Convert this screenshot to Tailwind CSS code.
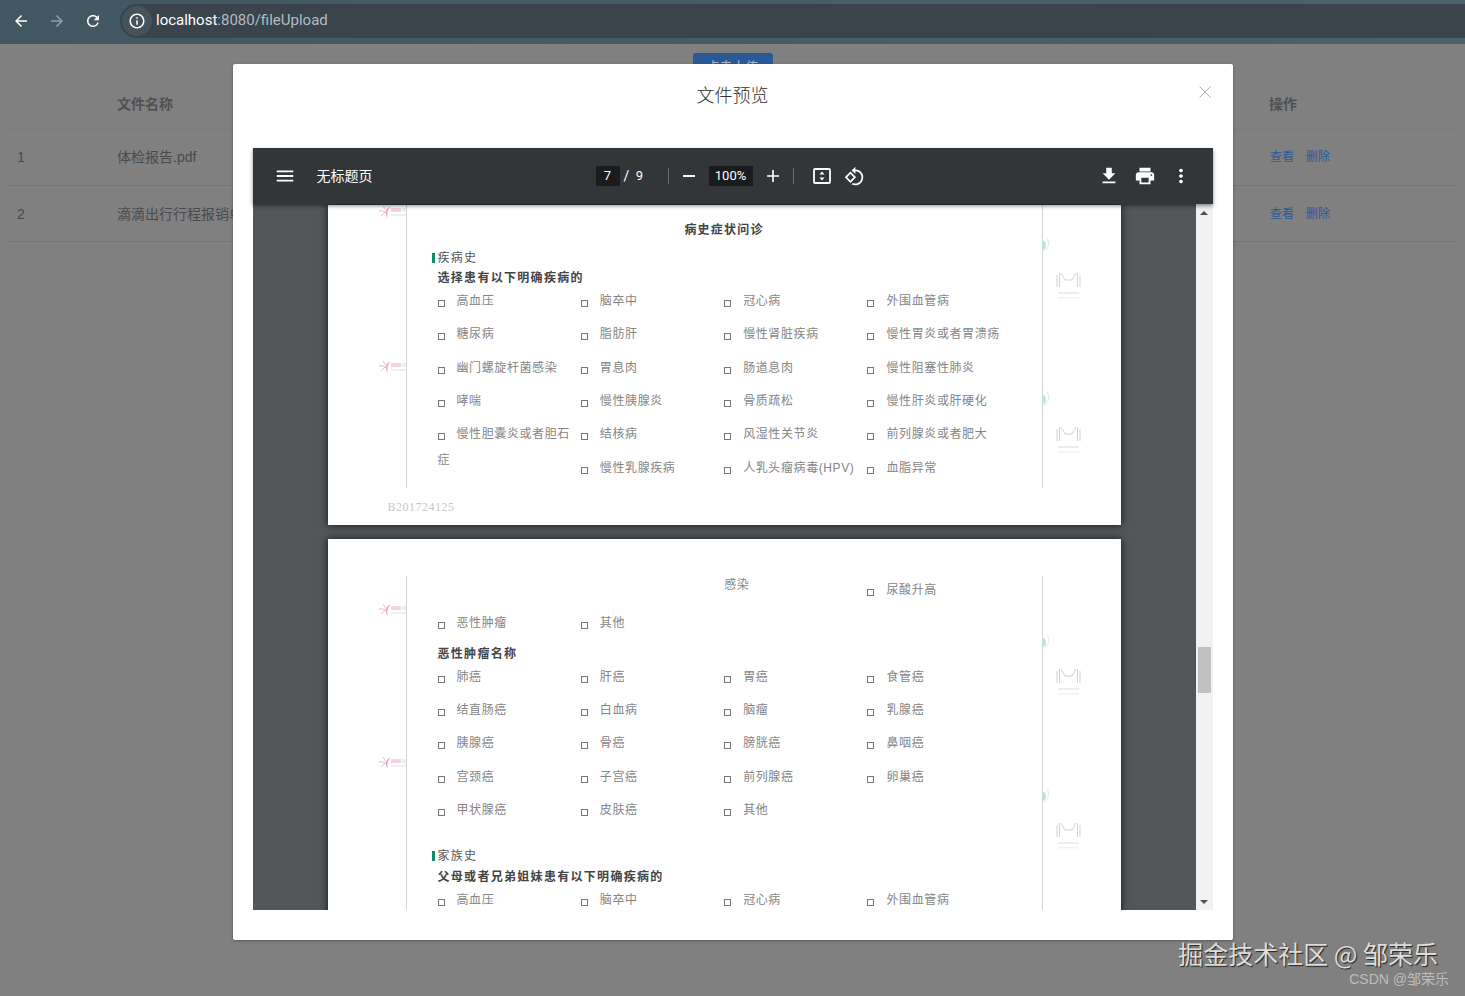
<!DOCTYPE html>
<html lang="en">
<head>
    <meta charset="UTF-8">
    <title>文件上传</title>
    <script src="https://cdn.jsdelivr.net/npm/@tailwindcss/browser@4"></script>
</head>
<body class="bg-[#808080] font-['Liberation_Sans','Noto_Sans_CJK_SC',sans-serif]">
    <svg class="hidden">
        <symbol id="pink" viewBox="0 0 29 14">
            <path d="M13 1C8 3 6 8 10 13C8.5 8 10 4 13 1z" fill="#eda3b8"/>
            <path d="M1 6c3-.5 5 0 7 2M5 1c1 1 2 3 3 5M3 11c1-1 3-3 4-4" stroke="#edb9c8" stroke-width="1" fill="none"/>
            <rect x="13" y="3" width="10" height="4" fill="#f6d3dd"/>
            <rect x="24" y="3" width="4" height="4" fill="#f1eef0"/>
            <rect x="13" y="9" width="15" height="2" fill="#f1eef0"/>
        </symbol>
        <symbol id="mark" viewBox="0 0 25 29">
            <path d="M1 4v12M3.5 2v14M21.5 2v14M24 4v12M5 2l4 7h7l4-7" stroke="#d2d2cf" stroke-width="1" fill="none"/>
            <rect x="2" y="21" width="21" height="2" fill="#efedea"/>
            <rect x="2" y="26" width="21" height="1.5" fill="#f4f2ee"/>
        </symbol>
        <symbol id="arc" viewBox="0 0 8 17">
            <path d="M0 3c3 1 4 3 4 6s-2 4-4 4z" fill="#bfe3d9"/>
            <path d="M5 1c3 4 2 11-5 15" stroke="#dcebe6" stroke-width="1" fill="none"/>
        </symbol>
    </svg>

    <div class="relative h-[996px] overflow-hidden">
        <!-- Browser bar -->
        <div class="flex items-center h-[44px] bg-gradient-to-r from-[#415862] to-[#4a626d] pb-[2px]">
            <svg class="w-[18px] h-[18px] ml-[12px] fill-white" viewBox="0 0 24 24"><path d="M20 11H7.83l5.59-5.59L12 4l-8 8 8 8 1.41-1.41L7.83 13H20v-2z"/></svg>
            <svg class="w-[18px] h-[18px] ml-[18px] fill-[#8fa0aa]" viewBox="0 0 24 24"><path d="M12 4l-1.41 1.41L16.17 11H4v2h12.17l-5.58 5.59L12 20l8-8z"/></svg>
            <svg class="w-[18px] h-[18px] ml-[18px] fill-white" viewBox="0 0 24 24"><path d="M17.65 6.35C16.2 4.9 14.21 4 12 4c-4.42 0-7.99 3.58-7.99 8s3.57 8 7.99 8c3.73 0 6.84-2.55 7.73-6h-2.08c-.82 2.33-3.04 4-5.65 4-3.31 0-6-2.69-6-6s2.69-6 6-6c1.66 0 3.14.69 4.22 1.78L13 11h7V4l-2.35 2.35z"/></svg>
            <div class="flex items-center flex-1 h-[34px] ml-[18px] pl-[2px] rounded-l-full bg-[#39444c]">
                <div class="flex items-center justify-center w-[30px] h-[30px] rounded-full bg-[#46535c]">
                    <svg class="w-[18px] h-[18px] fill-white" viewBox="0 0 24 24"><path d="M11 7h2v2h-2zm0 4h2v6h-2zm1-9C6.48 2 2 6.48 2 12s4.48 10 10 10 10-4.48 10-10S17.52 2 12 2zm0 18c-4.41 0-8-3.59-8-8s3.59-8 8-8 8 3.59 8 8-3.59 8-8 8z"/></svg>
                </div>
                <span class="ml-[4px] pb-[1px] text-[15px] text-[#b3bcc2] font-['Roboto',sans-serif]"><span class="text-white">localhost</span>:8080/fileUpload</span>
            </div>
        </div>

        <!-- Page under the dialog -->
        <div class="flex justify-center pt-[9px]">
            <div class="flex justify-center w-[80px] h-[28px] pt-[4px] rounded-t-[3px] bg-[#2a5a94] text-[13px] text-[#a9bdd6]">点击上传</div>
        </div>
        <div class="mx-2 mt-[4px] text-[14px] text-[#4a4a4a]">
            <div class="flex items-center h-[45px] pb-[6px] pl-[9px] font-bold text-[#505050] border-b border-[#7b7b7b]">
                <div class="w-[100px]"></div>
                <div class="flex-1">文件名称</div>
                <div class="w-[188px]">操作</div>
            </div>
            <div class="flex items-center h-[56px] pl-[9px] border-b border-[#757575]">
                <div class="w-[100px]">1</div>
                <div class="flex-1">体检报告.pdf</div>
                <div class="flex gap-3 w-[187px] pb-[2px] text-[12px] text-[#2b5b96]"><span>查看</span><span>删除</span></div>
            </div>
            <div class="flex items-center h-[56px] pl-[9px] pt-[1px] border-b border-[#757575]">
                <div class="w-[100px]">2</div>
                <div class="flex-1">滴滴出行行程报销单.pdf</div>
                <div class="flex gap-3 w-[187px] text-[12px] text-[#2b5b96]"><span>查看</span><span>删除</span></div>
            </div>
        </div>

        <!-- Dialog -->
        <div class="absolute inset-x-0 top-[44px] flex justify-center pt-[20px]">
            <div class="relative w-[1000px] h-[876px] px-[20px] bg-white rounded-[2px] shadow-[0_1px_3px_rgba(0,0,0,0.3)]">
                <div class="flex items-center justify-center h-[60px] text-[18px] text-[#303133] font-['Noto_Sans_CJK_SC',sans-serif] font-light">文件预览</div>
                <svg class="absolute top-[22px] right-[22px] w-[12px] h-[12px] stroke-[#a8abb2]" viewBox="0 0 12 12" fill="none"><path d="M.5.5l11 11M11.5.5l-11 11"/></svg>

                <!-- PDF viewer -->
                <div class="mt-[24px] h-[762px] flex flex-col">
                    <div class="relative z-10 flex items-center h-[56px] shrink-0 bg-[#323639] text-white shadow-[0_2px_4px_rgba(0,0,0,0.45)]">
                        <svg class="w-[22px] h-[22px] ml-[21px] fill-white" viewBox="0 0 24 24"><path d="M3 18h18v-2H3v2zm0-5h18v-2H3v2zm0-7v2h18V6H3z"/></svg>
                        <div class="w-[279px] ml-[21px] text-[14px]">无标题页</div>
                        <div class="flex items-center justify-center w-[24px] h-[20px] bg-[#191b1c] text-[13px] font-['Roboto',sans-serif]">7</div>
                        <div class="w-[16px] -ml-px text-center text-[14px] font-['Roboto',sans-serif]">/</div>
                        <div class="w-[12px] -ml-px text-center text-[13px] font-['Roboto',sans-serif]">9</div>
                        <div class="w-px h-[16px] ml-[22px] bg-[#6b6f72]"></div>
                        <svg class="w-[18px] h-[18px] ml-[11px] fill-white" viewBox="0 0 18 18"><path d="M3 8h12v2H3z"/></svg>
                        <div class="flex items-center justify-center w-[44px] h-[20px] ml-[11px] bg-[#191b1c] text-[13px] font-['Roboto',sans-serif]">100%</div>
                        <svg class="w-[18px] h-[18px] ml-[11px] fill-white" viewBox="0 0 18 18"><path d="M3 8.2h5.2V3h1.6v5.2H15v1.6H9.8V15H8.2V9.8H3z"/></svg>
                        <div class="w-px h-[16px] ml-[11px] bg-[#6b6f72]"></div>
                        <svg class="w-[20px] h-[18px] ml-[18px]" viewBox="0 0 20 18"><rect x="2" y="2" width="16" height="14" rx="1" fill="none" stroke="#fff" stroke-width="1.8"/><path d="M10 4.5l2.5 3h-5zM10 13.5l-2.5-3h5z" fill="#fff"/></svg>
                        <svg class="w-[21px] h-[21px] ml-[12px] fill-white" viewBox="0 0 24 24"><path d="M7.34 6.41L.86 12.9l6.49 6.48 6.49-6.48-6.5-6.49zM3.69 12.9l3.66-3.66L11 12.9l-3.66 3.66-3.65-3.66zm15.67-6.26C17.61 4.88 15.3 4 13 4V.76L8.76 5 13 9.24V6c1.79 0 3.58.68 4.95 2.05 2.73 2.73 2.73 7.17 0 9.9C16.58 19.32 14.79 20 13 20c-.97 0-1.94-.21-2.84-.61l-1.49 1.49C10.02 21.62 11.51 22 13 22c2.3 0 4.61-.88 6.36-2.64 3.52-3.51 3.52-9.21 0-12.72z"/></svg>
                        <div class="flex items-center ml-auto mr-[21px] gap-[14px]">
                            <svg class="w-[22px] h-[22px] fill-white" viewBox="0 0 24 24"><path d="M19 9h-4V3H9v6H5l7 7 7-7zM5 18v2h14v-2H5z"/></svg>
                            <svg class="w-[22px] h-[22px] fill-white" viewBox="0 0 24 24"><path d="M19 8H5c-1.66 0-3 1.34-3 3v6h4v4h12v-4h4v-6c0-1.66-1.34-3-3-3zm-3 11H8v-5h8v5zm3-7c-.55 0-1-.45-1-1s.45-1 1-1 1 .45 1 1-.45 1-1 1zm-1-9H6v4h12V3z"/></svg>
                            <svg class="w-[22px] h-[22px] fill-white" viewBox="0 0 24 24"><path d="M12 8c1.1 0 2-.9 2-2s-.9-2-2-2-2 .9-2 2 .9 2 2 2zm0 2c-1.1 0-2 .9-2 2s.9 2 2 2 2-.9 2-2-.9-2-2-2zm0 6c-1.1 0-2 .9-2 2s.9 2 2 2 2-.9 2-2-.9-2-2-2z"/></svg>
                        </div>
                    </div>

                    <div class="flex h-[706px]">
                        <div class="flex flex-col items-center gap-[14px] flex-1 overflow-hidden bg-[#525659]">
                            <!-- page 7 -->
                            <div class="relative shrink-0 w-[793px] h-[320px] mt-px bg-white shadow-[0_0_7px_rgba(0,0,0,0.75)]">
                                <svg class="absolute left-[50px] top-0 w-[29px] h-[14px]"><use href="#pink"/></svg>
                                <svg class="absolute left-[50px] top-[155px] w-[29px] h-[14px]"><use href="#pink"/></svg>
                                <svg class="absolute left-[714px] top-[32px] w-[8px] h-[17px]"><use href="#arc"/></svg>
                                <svg class="absolute left-[714px] top-[186px] w-[8px] h-[17px]"><use href="#arc"/></svg>
                                <svg class="absolute left-[728px] top-[66px] w-[25px] h-[29px]"><use href="#mark"/></svg>
                                <svg class="absolute left-[728px] top-[220px] w-[25px] h-[29px]"><use href="#mark"/></svg>
                                <div class="ml-[78px] w-[637px] h-[283px] border-x border-[#d4d4d4] pt-[15px] pl-[31px]">
                                    <div class="-ml-[31px] text-center h-[20px] leading-[20px] text-[12px] font-bold tracking-[1.2px] text-[#444]">病史症状问诊</div>
                                    <div class="flex items-center -ml-[6px] mt-[8px] h-[20px] text-[12px] tracking-[1.2px] text-[#555]"><span class="w-[3px] h-[10px] mr-[3px] bg-[#0a8f6a]"></span>疾病史</div>
                                    <div class="h-[20px] leading-[20px] text-[12px] font-bold tracking-[1.3px] text-[#444]">选择患有以下明确疾病的</div>
                                    <div class="grid grid-cols-[143.33px_143.33px_143.33px_143.33px] auto-rows-[33.33px] text-[12px] tracking-[0.6px] leading-[26px] text-[#858585] [&_i]:inline-block [&_i]:w-[7px] [&_i]:h-[7px] [&_i]:mr-[12px] [&_i]:border [&_i]:border-[#777] [&_i]:align-[-2px]">
                                        <div><i></i>高血压</div><div><i></i>脑卒中</div><div><i></i>冠心病</div><div><i></i>外围血管病</div>
                                        <div><i></i>糖尿病</div><div><i></i>脂肪肝</div><div><i></i>慢性肾脏疾病</div><div class="whitespace-nowrap"><i></i>慢性胃炎或者胃溃疡</div>
                                        <div><i></i>幽门螺旋杆菌感染</div><div><i></i>胃息肉</div><div><i></i>肠道息肉</div><div><i></i>慢性阻塞性肺炎</div>
                                        <div><i></i>哮喘</div><div><i></i>慢性胰腺炎</div><div><i></i>骨质疏松</div><div><i></i>慢性肝炎或肝硬化</div>
                                        <div class="row-span-2"><i></i>慢性胆囊炎或者胆石症</div><div><i></i>结核病</div><div><i></i>风湿性关节炎</div><div><i></i>前列腺炎或者肥大</div>
                                        <div><i></i>慢性乳腺疾病</div><div class="whitespace-nowrap"><i></i>人乳头瘤病毒(HPV)</div><div><i></i>血脂异常</div>
                                    </div>
                                </div>
                                <div class="ml-[60px] mt-[9px] h-[20px] leading-[20px] text-[12px] tracking-[0.5px] text-[#c8c8c8] font-['Liberation_Serif',serif]">B201724125</div>
                            </div>

                            <!-- page 8 -->
                            <div class="relative shrink-0 w-[793px] h-[800px] bg-white shadow-[0_0_7px_rgba(0,0,0,0.75)]">
                                <svg class="absolute left-[50px] top-[64px] w-[29px] h-[14px]"><use href="#pink"/></svg>
                                <svg class="absolute left-[50px] top-[217px] w-[29px] h-[14px]"><use href="#pink"/></svg>
                                <svg class="absolute left-[714px] top-[95px] w-[8px] h-[17px]"><use href="#arc"/></svg>
                                <svg class="absolute left-[714px] top-[249px] w-[8px] h-[17px]"><use href="#arc"/></svg>
                                <svg class="absolute left-[728px] top-[128px] w-[25px] h-[29px]"><use href="#mark"/></svg>
                                <svg class="absolute left-[728px] top-[282px] w-[25px] h-[29px]"><use href="#mark"/></svg>
                                <div class="ml-[78px] mt-[37px] w-[637px] h-[700px] border-x border-[#d4d4d4] pt-px pl-[31px]">
                                    <div class="grid grid-cols-[143.33px_143.33px_143.33px_143.33px] auto-rows-[33.33px] text-[12px] tracking-[0.6px] leading-[26px] text-[#858585] [&_i]:inline-block [&_i]:w-[7px] [&_i]:h-[7px] [&_i]:mr-[12px] [&_i]:border [&_i]:border-[#777] [&_i]:align-[-2px]">
                                        <div class="col-start-3 -mt-[5px]">感染</div><div><i></i>尿酸升高</div>
                                        <div><i></i>恶性肿瘤</div><div><i></i>其他</div>
                                    </div>
                                    <div class="h-[20px] leading-[20px] text-[12px] font-bold tracking-[1.3px] text-[#444]">恶性肿瘤名称</div>
                                    <div class="grid grid-cols-[143.33px_143.33px_143.33px_143.33px] auto-rows-[33.33px] text-[12px] tracking-[0.6px] leading-[26px] text-[#858585] [&_i]:inline-block [&_i]:w-[7px] [&_i]:h-[7px] [&_i]:mr-[12px] [&_i]:border [&_i]:border-[#777] [&_i]:align-[-2px]">
                                        <div><i></i>肺癌</div><div><i></i>肝癌</div><div><i></i>胃癌</div><div><i></i>食管癌</div>
                                        <div><i></i>结直肠癌</div><div><i></i>白血病</div><div><i></i>脑瘤</div><div><i></i>乳腺癌</div>
                                        <div><i></i>胰腺癌</div><div><i></i>骨癌</div><div><i></i>膀胱癌</div><div><i></i>鼻咽癌</div>
                                        <div><i></i>宫颈癌</div><div><i></i>子宫癌</div><div><i></i>前列腺癌</div><div><i></i>卵巢癌</div>
                                        <div><i></i>甲状腺癌</div><div><i></i>皮肤癌</div><div><i></i>其他</div>
                                    </div>
                                    <div class="flex items-center -ml-[6px] mt-[16px] h-[20px] text-[12px] tracking-[1.2px] text-[#555]"><span class="w-[3px] h-[10px] mr-[3px] bg-[#0a8f6a]"></span>家族史</div>
                                    <div class="mt-px h-[20px] leading-[20px] text-[12px] font-bold tracking-[1.3px] text-[#444]">父母或者兄弟姐妹患有以下明确疾病的</div>
                                    <div class="grid grid-cols-[143.33px_143.33px_143.33px_143.33px] auto-rows-[33.33px] text-[12px] tracking-[0.6px] leading-[26px] text-[#858585] [&_i]:inline-block [&_i]:w-[7px] [&_i]:h-[7px] [&_i]:mr-[12px] [&_i]:border [&_i]:border-[#777] [&_i]:align-[-2px]">
                                        <div><i></i>高血压</div><div><i></i>脑卒中</div><div><i></i>冠心病</div><div><i></i>外围血管病</div>
                                    </div>
                                </div>
                            </div>
                        </div>

                        <!-- scrollbar -->
                        <div class="flex flex-col items-center w-[17px] bg-[#f1f1f1]">
                            <div class="flex items-center justify-center h-[17px]"><span class="border-x-[4px] border-x-transparent border-b-[4px] border-b-[#505050]"></span></div>
                            <div class="w-[13px] h-[46px] mt-[426px] bg-[#c1c1c1]"></div>
                            <div class="flex items-center justify-center h-[17px] mt-auto"><span class="border-x-[4px] border-x-transparent border-t-[4px] border-t-[#505050]"></span></div>
                        </div>
                    </div>
                </div>
            </div>
        </div>

        <!-- Watermarks -->
        <div class="absolute right-[27px] top-[939px] text-[25px] leading-[28px] text-[#dcdcdc] font-['Noto_Sans_CJK_SC',sans-serif] [text-shadow:1px_1px_1px_#222] whitespace-nowrap">掘金技术社区 @ 邹荣乐</div>
        <div class="absolute right-[16px] top-[970px] text-[14px] leading-[18px] text-[#bdbdbd] whitespace-nowrap">CSDN @邹荣乐</div>
    </div>
</body>
</html>
